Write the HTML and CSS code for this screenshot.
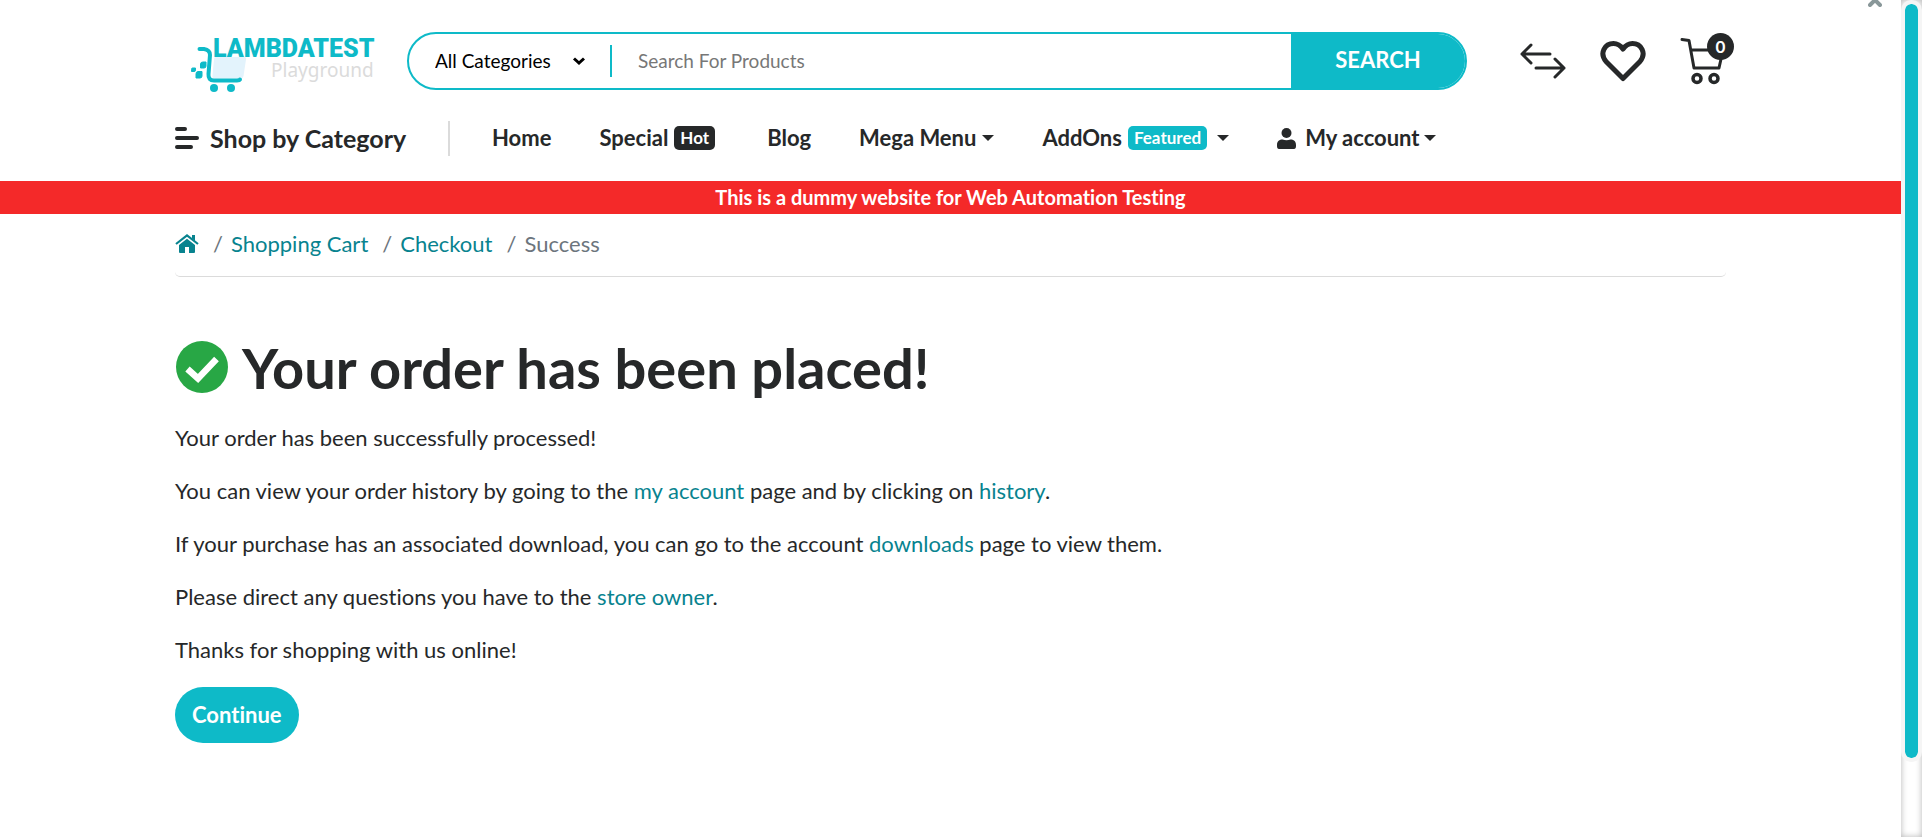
FILE: index.html
```html
<!DOCTYPE html>
<html lang="en">
<head>
<meta charset="utf-8">
<meta name="viewport" content="width=device-width, initial-scale=1">
<title>Your order has been placed!</title>
<link rel="stylesheet" href="styles.css">
</head>
<body>
<div class="page">
  <header class="header">
    <div class="container topbar">
      <a class="logo" href="#" aria-label="LambdaTest Playground">
        <svg width="190" height="64" viewBox="0 -4 190 64">
          <path d="M25.500 24H54.500Q56.500 24 56 26.500L53.500 43Q53 45.500 50.500 45.500H24.500Q22 45.500 22.500 42.500L24 26Q24 24 25.500 24Z" fill="#e3f3fc"/>
          <path d="M9.500 16H14Q20 17 20 22L18.500 41Q18 47.500 24 47.500H47Q49.500 47.500 50 46.500" fill="none" stroke="#0ebac8" stroke-width="4" stroke-linecap="round"/>
          <circle cx="24" cy="55" r="4" fill="#0ebac8"/><circle cx="41" cy="55" r="4" fill="#0ebac8"/>
          <path d="M13 29H16V33Q16 35 14 35H10.500V31Q10.500 29 13 29ZM2.500 35H5.500V37Q5.500 38.500 4 38.500H1.500V36.500Q1.500 35 2.500 35ZM8 38.500H12V43Q12 45 10 45H6V41Q6 38.500 8 38.500Z" fill="#0ebac8" stroke="#0ebac8" stroke-width="1" stroke-linejoin="round"/>
          <text class="logo-name" x="23" y="24">LAMBDATEST</text>
          <text class="logo-sub" x="81" y="44">Playground</text>
        </svg>
      </a>
      <form class="search">
        <div class="category">
          <select aria-label="Category"><option>All Categories</option></select>
          <svg width="14" height="10" viewBox="0 0 14 10"><path d="M2 2.500L7 7L12 2.500" fill="none" stroke="#000" stroke-width="3"/></svg>
        </div>
        <input type="text" placeholder="Search For Products" aria-label="Search For Products">
        <button type="button">SEARCH</button>
      </form>
      <div class="tools">
        <a href="#" aria-label="Compare"><svg width="46" height="50" viewBox="0 0 46 50"><path d="M2 18H30M2 18L11 9M2 18L11 27M16 32H44M44 32L35 23M44 32L35 41" fill="none" stroke="#262829" stroke-width="3" stroke-linecap="round"/></svg></a>
        <a href="#" aria-label="Wish list"><svg width="46" height="50" viewBox="0 0 46 50"><path d="M23 42.500L6 25.500C-1 17 5 7.500 13.500 7.500C17.500 7.500 20.500 9.500 23 13C25.500 9.500 28.500 7.500 32.500 7.500C41 7.500 47 17 40 25.500Z" fill="none" stroke="#262829" stroke-width="5" stroke-linejoin="round"/></svg></a>
        <a class="cart" href="#" aria-label="Cart, 0 items"><svg width="46" height="50" viewBox="0 0 46 50"><path d="M2 3.500L9 4.500L14 32H39L43 14H11" fill="none" stroke="#262829" stroke-width="3" stroke-linecap="round" stroke-linejoin="round"/><g fill="none" stroke="#262829" stroke-width="3.500"><circle cx="17" cy="42.500" r="4"/><circle cx="34" cy="42.500" r="4"/></g></svg><span class="count">0</span></a>
      </div>
    </div>
    <nav class="container nav">
      <a class="shop" href="#"><svg width="24" height="22" viewBox="0 0 24 22"><path d="M2 2H10M2 11H22M2 20H16" stroke="#262829" stroke-width="4" stroke-linecap="round"/></svg>Shop by Category</a>
      <ul class="menu">
        <li><a href="#">Home</a></li>
        <li class="special"><a href="#">Special<span class="badge">Hot</span></a></li>
        <li><a href="#">Blog</a></li>
        <li><a href="#">Mega Menu<i class="caret"></i></a></li>
        <li class="addons"><a href="#">AddOns<span class="badge featured">Featured</span><i class="caret"></i></a></li>
        <li class="account"><a href="#"><svg width="19" height="21" viewBox="0 0 19 21"><circle cx="9.500" cy="5" r="5" fill="#262829"/><path d="M0 18V17C0 13 2.500 11.500 5.500 11.500Q9.500 13 13.500 11.500C16.500 11.500 19 13 19 17V18Q19 21 17 21H2Q0 21 0 18Z" fill="#262829"/></svg>My account<i class="caret"></i></a></li>
      </ul>
    </nav>
    <p class="notice">This is a dummy website for Web Automation Testing</p>
    <button class="close" type="button" aria-label="Close"><svg width="14" height="14" viewBox="0 0 14 14"><path d="M2 2L12 12M12 2L2 12" stroke="#899799" stroke-width="4" stroke-linecap="round"/></svg></button>
  </header>
  <main class="container">
    <nav aria-label="Breadcrumb">
      <ol class="breadcrumb">
        <li><a href="#" aria-label="Home"><svg width="24" height="20" viewBox="0 0 24 20"><path d="M1 10L12 1.500L23 10" fill="none" stroke="#08838f" stroke-width="2.200"/><path d="M17 1H20V7L17 4.500ZM4 11L12 4.800L20 11V18Q20 19 19 19H14V13H10V19H5Q4 19 4 18Z" fill="#08838f"/></svg></a></li>
        <li><a href="#">Shopping Cart</a></li>
        <li><a href="#">Checkout</a></li>
        <li>Success</li>
      </ol>
    </nav>
    <h1><svg width="54" height="54" viewBox="0 0 54 54"><circle cx="27" cy="26" r="26" fill="#28a745"/><path d="M12.500 28L23 37.500L41.500 18" fill="none" stroke="#fff" stroke-width="6.500" stroke-linejoin="miter"/></svg>Your order has been placed!</h1>
    <div class="copy">
      <p>Your order has been successfully processed!</p>
      <p>You can view your order history by going to the <a href="#">my account</a> page and by clicking on <a href="#">history</a>.</p>
      <p>If your purchase has an associated download, you can go to the account <a href="#">downloads</a> page to view them.</p>
      <p>Please direct any questions you have to the <a href="#">store owner</a>.</p>
      <p>Thanks for shopping with us online!</p>
    </div>
    <a class="continue" href="#">Continue</a>
  </main>
</div>
<div class="scrollbar" aria-hidden="true"><div class="thumb"></div></div>
</body>
</html>
```
FILE: styles.css
```css
* { box-sizing: border-box; }
body {
  margin: 0;
  display: flex;
  min-height: 100vh;
  background: #fff;
  color: #262829;
  font: 22px/32px Lato, "Open Sans", sans-serif;
  font-variant-ligatures: none;
}
a { color: #08838f; text-decoration: none; }
svg { display: block; flex: none; }
button, input, select { font: inherit; margin: 0; }
.page { flex: 1; min-width: 0; position: relative; }
.container { width: 82%; max-width: 1551px; margin: 0 auto; }

.topbar { display: flex; align-items: center; padding-top: 29px; }
.logo { margin-left: 15px; }
.logo-name { font: 900 25px Roboto, sans-serif; fill: #0ebac8; }
.logo-sub { font: 19px "Noto Sans", sans-serif; fill: #dbdbdb; }
.search {
  flex: 1;
  display: flex;
  height: 58px;
  margin: 0 53px 0 27px;
  border: 2px solid #0ebac8;
  border-radius: 29px;
  overflow: hidden;
  font-size: 19px;
}
.category {
  display: flex;
  align-items: center;
  position: relative;
  width: 203px;
  height: 32px;
  margin: 11px 0;
  padding-left: 26px;
  border-right: 2px solid #0ebac8;
}
.category select {
  appearance: none;
  flex: 1;
  padding: 0;
  border: 0;
  background: none;
  color: #000;
}
.category svg { position: absolute; right: 24px; pointer-events: none; }
.search input {
  flex: 1;
  min-width: 0;
  padding: 0 26px;
  border: 0;
  outline: 0;
}
.search input::placeholder { color: #777; opacity: 1; }
.search button {
  width: 174px;
  padding: 0 0 3px;
  border: 0;
  background: #0ebac8;
  color: #fff;
  font-size: 22px;
  font-weight: 700;
}
.tools { display: flex; gap: 34px; }
.cart { position: relative; }
.count {
  position: absolute;
  top: -3px;
  right: -8px;
  width: 27px;
  height: 27px;
  border-radius: 50%;
  background: #262829;
  color: #fff;
  font-size: 17px;
  font-weight: 700;
  line-height: 27px;
  text-align: center;
}

.nav { display: flex; align-items: center; height: 88px; padding-top: 2px; }
.nav a { display: flex; align-items: center; color: #262829; font-weight: 700; white-space: nowrap; }
.nav .shop {
  width: 275px;
  height: 35px;
  gap: 11px;
  border-right: 2px solid #dbdbdb;
  font-size: 25px;
}
.menu { display: flex; gap: 48px; margin: 0; padding: 0 0 0 42px; list-style: none; }
.badge {
  margin-left: 6px;
  padding: 0 6px;
  border-radius: 5px;
  background: #262829;
  color: #fff;
  font-size: 17px;
  line-height: 24px;
}
.special { margin-right: 4px; }
.featured { margin-right: 4px; background: #0ebac8; }
.caret {
  margin-left: 6px;
  border: 6px solid transparent;
  border-top-color: #262829;
  border-bottom: 0;
}
.account svg { margin-right: 9px; }
.account .caret { margin-left: 4px; }
.notice {
  margin: 0;
  background: #f42929;
  color: #fff;
  font-size: 20px;
  font-weight: 700;
  line-height: 33px;
  text-align: center;
}
.close {
  position: absolute;
  top: -7px;
  right: 19px;
  padding: 0;
  border: 0;
  background: none;
}

.breadcrumb {
  display: flex;
  align-items: center;
  margin: 0 0 59px;
  padding: 14px 0 16px;
  border-bottom: 1px solid #dbdbdb;
  border-radius: 5px;
  color: #6c757d;
  list-style: none;
}
.breadcrumb li { display: flex; align-items: center; }
.breadcrumb li + li::before { content: "/"; padding: 0 8px 0 14px; }
h1 {
  display: flex;
  align-items: center;
  gap: 13px;
  margin: 0 0 22px;
  font-size: 56px;
  font-weight: 700;
  line-height: 64px;
}
.copy p { margin: 0 0 21px; }
.continue {
  display: inline-block;
  padding: 12px 17px;
  border-radius: 28px;
  background: #0ebac8;
  color: #fff;
  font-weight: 700;
}

.scrollbar {
  flex: none;
  width: 21px;
  height: 100vh;
  background: #fff;
  box-shadow: inset 0 0 6px rgba(0, 0, 0, .3);
}
.thumb {
  height: 91%;
  border: 4px solid #f5f5f5;
  border-radius: 10px;
  background: #0ebac8 padding-box;
}
```
